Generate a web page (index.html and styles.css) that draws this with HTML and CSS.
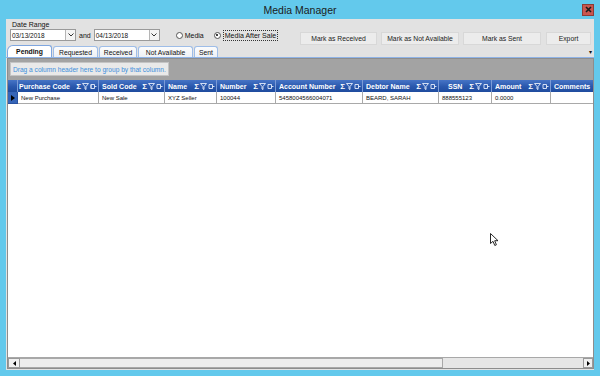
FILE: index.html
```html
<!DOCTYPE html>
<html>
<head>
<meta charset="utf-8">
<link rel="stylesheet" href="styles.css">
</head>
<body>
<div class="window">
  <div class="titlebar">
    <span></span>
    <span class="title">Media Manager</span>
    <span class="close"><svg width="7" height="7" viewBox="0 0 7 7"><path d="M1 1L6 6M6 1L1 6" stroke="#1a1a1a" stroke-width="1.6"/></svg></span>
  </div>
  <div class="frame">
    <div class="top">
      <div class="dates">
        <div class="label">Date Range</div>
        <div class="daterow">
          <div class="datebox"><span class="val">03/13/2018</span><span class="dd"><svg width="6" height="4" viewBox="0 0 6 4"><path d="M0.5 0.5L3 3L5.5 0.5" fill="none" stroke="#333" stroke-width="1"/></svg></span></div>
          <span class="and">and</span>
          <div class="datebox"><span class="val">04/13/2018</span><span class="dd"><svg width="6" height="4" viewBox="0 0 6 4"><path d="M0.5 0.5L3 3L5.5 0.5" fill="none" stroke="#333" stroke-width="1"/></svg></span></div>
          <span class="radio r1"><span class="circle"></span><span class="rtext">Media</span></span>
          <span class="radio r2"><span class="circle on"></span><span class="rtext focus">Media After Sale</span></span>
        </div>
      </div>
      <div class="buttons">
        <button class="btn w77">Mark as Received</button>
        <button class="btn w78">Mark as Not Available</button>
        <button class="btn w78">Mark as Sent</button>
        <button class="btn w45">Export</button>
      </div>
    </div>
    <div class="tabs">
      <span class="tab active t1">Pending</span>
      <span class="tab t2">Requested</span>
      <span class="tab t3">Received</span>
      <span class="tab t4">Not Available</span>
      <span class="tab t5">Sent</span>
      <span class="more">&#9662;</span>
    </div>
    <div class="grid">
      <div class="group"><span class="groupbox">Drag a column header here to group by that column.</span></div>
      <div class="cols header">
        <div class="hc sel"></div>
        <div class="hc first"><span class="ht">Purchase Code</span><span class="hi"><b>&Sigma;</b><svg width="15" height="7" viewBox="0 0 15 7"><path d="M0.5 0.5H6.5L4 3.5V6.5L3 6V3.5Z" fill="none" stroke="#e4ecfa" stroke-width="0.9"/><path d="M9 1.5H12.5V5.5H9ZM12.5 3.5H14.5M9 1.5V5.5" fill="none" stroke="#e4ecfa" stroke-width="0.9"/></svg></span></div>
        <div class="hc"><span class="ht">Sold Code</span><span class="hi"><b>&Sigma;</b><svg width="15" height="7" viewBox="0 0 15 7"><path d="M0.5 0.5H6.5L4 3.5V6.5L3 6V3.5Z" fill="none" stroke="#e4ecfa" stroke-width="0.9"/><path d="M9 1.5H12.5V5.5H9ZM12.5 3.5H14.5" fill="none" stroke="#e4ecfa" stroke-width="0.9"/></svg></span></div>
        <div class="hc"><span class="ht">Name</span><span class="hi"><b>&Sigma;</b><svg width="15" height="7" viewBox="0 0 15 7"><path d="M0.5 0.5H6.5L4 3.5V6.5L3 6V3.5Z" fill="none" stroke="#e4ecfa" stroke-width="0.9"/><path d="M9 1.5H12.5V5.5H9ZM12.5 3.5H14.5" fill="none" stroke="#e4ecfa" stroke-width="0.9"/></svg></span></div>
        <div class="hc"><span class="ht">Number</span><span class="hi"><b>&Sigma;</b><svg width="15" height="7" viewBox="0 0 15 7"><path d="M0.5 0.5H6.5L4 3.5V6.5L3 6V3.5Z" fill="none" stroke="#e4ecfa" stroke-width="0.9"/><path d="M9 1.5H12.5V5.5H9ZM12.5 3.5H14.5" fill="none" stroke="#e4ecfa" stroke-width="0.9"/></svg></span></div>
        <div class="hc"><span class="ht">Account Number</span><span class="hi"><b>&Sigma;</b><svg width="15" height="7" viewBox="0 0 15 7"><path d="M0.5 0.5H6.5L4 3.5V6.5L3 6V3.5Z" fill="none" stroke="#e4ecfa" stroke-width="0.9"/><path d="M9 1.5H12.5V5.5H9ZM12.5 3.5H14.5" fill="none" stroke="#e4ecfa" stroke-width="0.9"/></svg></span></div>
        <div class="hc"><span class="ht">Debtor Name</span><span class="hi"><b>&Sigma;</b><svg width="15" height="7" viewBox="0 0 15 7"><path d="M0.5 0.5H6.5L4 3.5V6.5L3 6V3.5Z" fill="none" stroke="#e4ecfa" stroke-width="0.9"/><path d="M9 1.5H12.5V5.5H9ZM12.5 3.5H14.5" fill="none" stroke="#e4ecfa" stroke-width="0.9"/></svg></span></div>
        <div class="hc"><span class="ht ssn">SSN</span><span class="hi"><b>&Sigma;</b><svg width="15" height="7" viewBox="0 0 15 7"><path d="M0.5 0.5H6.5L4 3.5V6.5L3 6V3.5Z" fill="none" stroke="#e4ecfa" stroke-width="0.9"/><path d="M9 1.5H12.5V5.5H9ZM12.5 3.5H14.5" fill="none" stroke="#e4ecfa" stroke-width="0.9"/></svg></span></div>
        <div class="hc"><span class="ht">Amount</span><span class="hi"><b>&Sigma;</b><svg width="15" height="7" viewBox="0 0 15 7"><path d="M0.5 0.5H6.5L4 3.5V6.5L3 6V3.5Z" fill="none" stroke="#e4ecfa" stroke-width="0.9"/><path d="M9 1.5H12.5V5.5H9ZM12.5 3.5H14.5" fill="none" stroke="#e4ecfa" stroke-width="0.9"/></svg></span></div>
        <div class="hc last"><span class="ht">Comments</span></div>
      </div>
      <div class="cols row">
        <div class="dc sel"><svg width="4" height="6" viewBox="0 0 4 6"><path d="M0 0L4 3L0 6Z" fill="#000"/></svg></div>
        <div class="dc">New Purchase</div>
        <div class="dc">New Sale</div>
        <div class="dc">XYZ Seller</div>
        <div class="dc">100044</div>
        <div class="dc">5458004566004071</div>
        <div class="dc">BEARD, SARAH</div>
        <div class="dc">888555123</div>
        <div class="dc">0.0000</div>
        <div class="dc last"></div>
      </div>
      <div class="gbody"></div>
      <div class="hscroll">
        <span class="arrow"><svg width="3" height="5" viewBox="0 0 3 5"><path d="M3 0L0 2.5L3 5Z" fill="#000"/></svg></span>
        <span class="thumb"></span>
        <span class="track"></span>
        <span class="arrow"><svg width="3" height="5" viewBox="0 0 3 5"><path d="M0 0L3 2.5L0 5Z" fill="#000"/></svg></span>
      </div>
    </div>
  </div>
  <svg class="cursor" width="11" height="14" viewBox="0 0 11 14"><path d="M0.5 0.5V10.5L3 8.3L4.8 12.5L6.4 11.8L4.7 7.7H8Z" fill="#fff" stroke="#111" stroke-width="0.9"/></svg>
</div>
</body>
</html>
```

FILE: styles.css
```css
* { box-sizing: border-box; margin: 0; padding: 0; }
html, body { width: 600px; height: 376px; overflow: hidden; }
body { font-family: "Liberation Sans", Arial, sans-serif; background: #63c9ec; }

.window { position: relative; width: 600px; height: 376px; display: flex; flex-direction: column; background: #63c9ec; }

.titlebar { height: 19px; display: grid; grid-template-columns: 1fr auto 1fr; align-items: center; padding: 0 6px; }
.title { font-size: 10.5px; color: #1b1b1b; }
.close { justify-self: end; width: 12px; height: 12px; background: #c9564f; border: 1px solid #8c3b36; display: flex; align-items: center; justify-content: center; }

.frame { flex: 1; display: flex; flex-direction: column; margin: 0 6px 6px 6px; background: #e2e2e2; }

.top { height: 27px; display: flex; padding: 0 3px 0 4px; }
.dates { display: flex; flex-direction: column; }
.label { font-size: 7px; line-height: 9px; margin: 1px 0 0 2px; color: #111; }
.daterow { display: flex; align-items: center; height: 12px; }
.datebox { width: 66px; height: 12px; background: #fff; border: 1px solid #9a9a9a; display: flex; align-items: center; }
.val { flex: 1; font-size: 6.5px; color: #111; padding-left: 1px; }
.dd { width: 10px; height: 10px; border-left: 1px solid #b5b5b5; background: #f4f4f4; display: flex; align-items: center; justify-content: center; }
.and { font-size: 7px; color: #111; margin: 0 3px 0 3px; }
.radio { display: flex; align-items: center; font-size: 7px; color: #111; }
.r1 { margin-left: 16px; }
.r2 { margin-left: 10px; }
.circle { width: 7px; height: 7px; border-radius: 50%; border: 1px solid #555; background: #fff; margin-right: 2px; position: relative; }
.circle.on::after { content: ""; position: absolute; left: 1.5px; top: 1.5px; width: 2px; height: 2px; border-radius: 50%; background: #000; }
.rtext.focus { border: 1px dotted #333; padding: 0 1px; line-height: 9px; }

.buttons { display: flex; gap: 4px; margin: 13px 0 0 auto; align-self: flex-start; }
.btn { height: 13px; font-family: "Liberation Sans", Arial, sans-serif; font-size: 6.8px; color: #222; background: #ececec; border: 1px solid #d8d8d8; }
.w77 { width: 77px; }
.w78 { width: 78px; }
.w45 { width: 45px; margin-left: 1px; }

.tabs { height: 12px; display: flex; align-items: flex-end; padding-left: 1px; border-bottom: 1px solid #8fb3e6; gap: 1px; }
.tab { height: 11px; display: flex; align-items: center; justify-content: center; font-size: 6.8px; color: #111; background: linear-gradient(#fcfcfc, #eef1f6); border: 1px solid #9ebde8; border-bottom: none; border-radius: 3px 3px 0 0; }
.tab.active { height: 12px; background: #fff; font-weight: bold; border-color: #7fa6df; border-radius: 6px 3px 0 0; }
.t1 { width: 45px; }
.t2 { width: 45px; }
.t3 { width: 38px; }
.t4 { width: 55px; }
.t5 { width: 24px; }
.more { margin-left: auto; font-size: 6px; line-height: 8px; color: #111; margin-right: 2px; align-self: center; }

.grid { flex: 1; margin: 0 0 1px 1px; border: 1px solid #8d8d8d; display: flex; flex-direction: column; background: #fff; }
.group { height: 21px; background: #a3a3a3; padding: 3px 0 0 2px; }
.groupbox { display: inline-block; width: 159px; height: 14px; line-height: 13px; background: #e9e9e9; border: 1px solid #c4c4c4; font-size: 6.6px; color: #3d8fdc; padding-left: 2px; white-space: nowrap; overflow: hidden; }

.cols { display: grid; grid-template-columns: 10px 81px 66px 52px 59px 87px 76px 53px 59px 1fr; }
.header { height: 12px; background: linear-gradient(#4674c6, #2a58ad 55%, #1f4c9f); }
.hc { display: flex; align-items: center; border-right: 1px solid #7c9bd6; color: #fff; font-size: 7px; font-weight: bold; padding-left: 3px; overflow: hidden; white-space: nowrap; }
.hc.sel { padding: 0; }
.hc.first { padding-left: 1px; }
.hc.last { border-right: none; padding-left: 3px; }
.ht.ssn { padding-left: 6px; }
.hi { margin-left: auto; display: flex; align-items: center; gap: 1px; padding-right: 1px; }
.hi b { font-size: 8px; color: #fff; }

.row { height: 12px; }
.dc { display: flex; align-items: center; font-size: 6px; color: #111; padding-left: 3px; border-right: 1px solid #a9a9a9; border-bottom: 1px solid #a9a9a9; white-space: nowrap; overflow: hidden; }
.dc.sel { background: #3665b8; padding-left: 3px; border-color: #2a52a0; }
.dc.last { border-right: none; }

.gbody { flex: 1; background: #fff; }

.hscroll { height: 11px; display: flex; border-top: 1px solid #a8a8a8; background: #e6e6e6; }
.arrow { width: 12px; height: 10px; border: 1px solid #9a9a9a; background: #f0f0f0; display: flex; align-items: center; justify-content: center; }
.arrow:last-child { width: 10px; }
.thumb { width: 423px; height: 10px; background: #ededed; border: 1px solid #a8a8a8; border-left: none; }
.track { flex: 1; }

.cursor { position: absolute; left: 490px; top: 233px; }
```
